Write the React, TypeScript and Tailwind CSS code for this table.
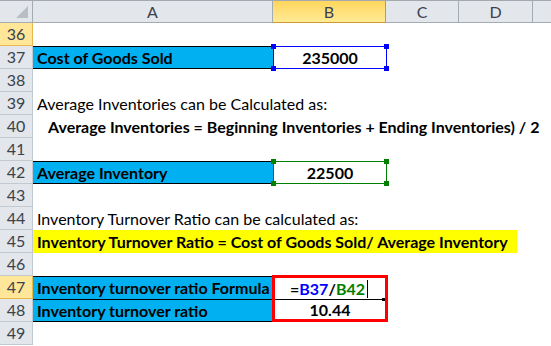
import React from "react";

/* row header cell (the grey number column) */
function RowHead({ n, active }: { n: number; active?: boolean }) {
  return (
    <div
      className={
        active
          ? "w-[33px] h-[23px] shrink-0 flex items-center justify-center bg-[#ffe698] border-r border-b border-[#e8b94a] text-[#39424f]"
          : "w-[33px] h-[23px] shrink-0 flex items-center justify-center bg-[#e3e6ea] border-r border-b border-[#c3c9d0] text-[#39424f]"
      }
    >
      {n}
    </div>
  );
}

/* plain row: number + free content */
function Row({ n, active, children }: { n: number; active?: boolean; children?: React.ReactNode }) {
  return (
    <div className="flex h-[23px]">
      <RowHead n={n} active={active} />
      <div className="flex-1 flex items-center whitespace-nowrap bg-white">{children}</div>
    </div>
  );
}

/* small square grip on the selection frame */
function Grip({ pos, color }: { pos: string; color: string }) {
  return <span className={`absolute w-[5px] h-[5px] ${color} ${pos}`} />;
}

export default function App() {
  return (
    <div className="w-[551px] h-[346px] overflow-hidden bg-white font-['Lato','Liberation_Sans',sans-serif] text-[16px] text-black leading-none">
      {/* COLUMN HEADERS */}
      <div className="flex h-[23px] border-t border-[#a4a9af] text-[#39424f]">
        <div className="relative w-[33px] shrink-0 bg-[#e3e6ea] border-r border-b border-[#a5abb2]">
          <span className="absolute right-[4px] bottom-[4px] w-0 h-0 border-l-[12px] border-l-transparent border-b-[12px] border-b-[#b9bec5]" />
        </div>
        <div className="w-[240px] shrink-0 flex items-center justify-center bg-[#e3e6ea] border-r border-b border-[#a5abb2]">A</div>
        <div className="w-[113px] shrink-0 flex items-center justify-center bg-gradient-to-b from-[#ffd65c] to-[#ffea94] border-r border-b border-[#c99a35]">B</div>
        <div className="w-[73px] shrink-0 flex items-center justify-center bg-[#e3e6ea] border-r border-b border-[#a5abb2]">C</div>
        <div className="w-[74px] shrink-0 flex items-center justify-center bg-[#e3e6ea] border-r border-b border-[#a5abb2]">D</div>
        <div className="flex-1 bg-[#e3e6ea] border-b border-[#a5abb2]" />
      </div>

      <Row n={36} active />

      {/* 37 */}
      <div className="flex h-[23px]">
        <RowHead n={37} />
        <div className="w-[240px] shrink-0 flex items-center pl-[4px] bg-[#00b0f0] border-y border-black font-bold">
          Cost of Goods Sold
        </div>
        <div className="relative w-[114px] shrink-0 flex items-center justify-center border border-[#0000ff] font-bold">
          235000
          <Grip color="bg-[#0000ff]" pos="-left-[3px] -top-[3px]" />
          <Grip color="bg-[#0000ff]" pos="-right-[3px] -top-[3px]" />
          <Grip color="bg-[#0000ff]" pos="-left-[3px] -bottom-[3px]" />
          <Grip color="bg-[#0000ff]" pos="-right-[3px] -bottom-[3px]" />
        </div>
      </div>

      <Row n={38} />
      <Row n={39}>
        <span className="pl-[4px]">Average Inventories can be Calculated as:</span>
      </Row>
      <Row n={40}>
        <span className="pl-[15px] font-bold">
          Average Inventories = Beginning Inventories + Ending Inventories) / 2
        </span>
      </Row>
      <Row n={41} />

      {/* 42 */}
      <div className="flex h-[23px]">
        <RowHead n={42} />
        <div className="w-[240px] shrink-0 flex items-center pl-[4px] bg-[#00b0f0] border-y border-black font-bold">
          Average Inventory
        </div>
        <div className="relative w-[114px] shrink-0 flex items-center justify-center border border-[#008000] font-bold">
          22500
          <Grip color="bg-[#008000]" pos="-left-[3px] -top-[3px]" />
          <Grip color="bg-[#008000]" pos="-right-[3px] -top-[3px]" />
          <Grip color="bg-[#008000]" pos="-left-[3px] -bottom-[3px]" />
          <Grip color="bg-[#008000]" pos="-right-[3px] -bottom-[3px]" />
        </div>
      </div>

      <Row n={43} />
      <Row n={44}>
        <span className="pl-[4px]">Inventory Turnover Ratio can be calculated as:</span>
      </Row>
      <Row n={45}>
        <div className="w-[484px] h-full flex items-center pl-[4px] bg-[#ffff00] font-bold">
          Inventory Turnover Ratio = Cost of Goods Sold/ Average Inventory
        </div>
      </Row>
      <Row n={46} />

      {/* 47 - 48 */}
      <div className="flex">
        <div className="flex flex-col">
          <RowHead n={47} active />
          <RowHead n={48} />
        </div>
        <div className="w-[240px] shrink-0 flex flex-col bg-[#00b0f0] border-y border-black font-bold">
          <div className="h-[23px] flex items-center pl-[4px] border-b border-black whitespace-nowrap">
            Inventory turnover ratio Formula
          </div>
          <div className="h-[21px] flex items-center pl-[4px]">Inventory turnover ratio</div>
        </div>
        <div className="w-[116px] h-[47px] -ml-px -mt-px shrink-0 flex flex-col border-[3px] border-[#ff0000] font-bold">
          <div className="relative h-[22px] flex items-center justify-center border-b border-black mr-[2px]">
            <span>
              =<span className="text-[#0000ff]">B37</span>/<span className="text-[#008000]">B42</span>
            </span>
            <span className="w-px h-[18px] bg-black ml-[2px]" />
            <span className="absolute -right-[2px] -bottom-[2px] w-[3px] h-[3px] bg-black" />
          </div>
          <div className="flex-1 flex items-center justify-center">10.44</div>
        </div>
      </div>

      <Row n={49} />
    </div>
  );
}
